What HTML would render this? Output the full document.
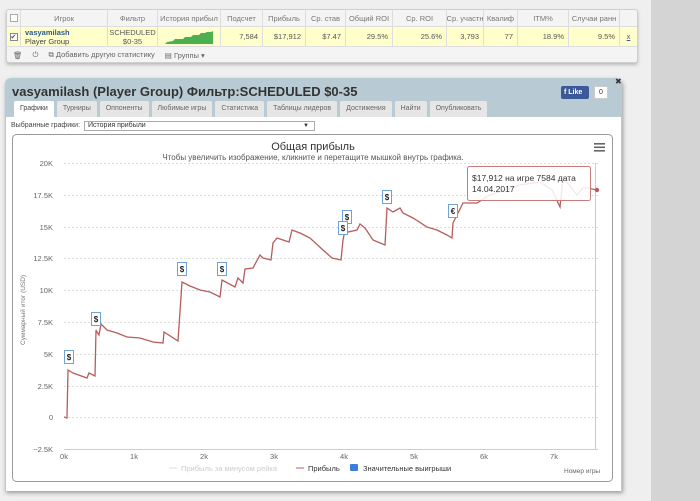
<!DOCTYPE html>
<html><head><meta charset="utf-8"><style>
*{box-sizing:border-box;margin:0;padding:0}
body{width:700px;height:501px;background:#efefef;font-family:"Liberation Sans","DejaVu Sans",sans-serif;position:relative;overflow:hidden;color:#333}
.strip{position:absolute;left:651px;top:0;width:49px;height:501px;background:#d4d4d4}
.tbl{position:absolute;left:6px;top:9px;width:632px;height:54px;background:#f4f4f4;border:1px solid #cfcfcf;border-radius:3px;box-shadow:0 2px 3px #bbb;font-size:7.5px;color:#777}
.row{position:absolute;left:0;width:630px;display:flex}
.row div{border-right:1px solid #ddd;height:100%;display:flex;align-items:center;justify-content:center;white-space:nowrap;overflow:hidden}
.h{top:0;height:17px;border-bottom:1px solid #ddd}
.d{top:17px;height:20px;background:#ffffcc;border-bottom:1px solid #ddd;color:#555}
.d div.r{justify-content:flex-end;padding-right:4px}
.f{top:37px;height:16px;color:#666;padding-left:6px;align-items:center;gap:10px}
.panel{position:absolute;left:5px;top:78px;width:617px;height:413px;background:#b8cbd4;border-radius:6px 6px 0 0;box-shadow:1px 2px 4px #999}
.title{position:absolute;left:7px;top:6px;font-size:13px;font-weight:bold;color:#333}
.tabs{position:absolute;left:9px;top:23px;display:flex;gap:3px}
.tabs span{background:#e6e6e6;font-size:7px;color:#666;padding:4px 6px 4px;border-radius:2px 2px 0 0;height:16px}
.tabs span.a{background:#fff;color:#444}
.content{position:absolute;left:1px;top:39px;width:615px;height:374px;background:#fff}
.sel{position:absolute;left:5px;top:5px;font-size:7px;color:#444}
.selbox{position:absolute;left:78px;top:4px;width:231px;height:10px;border:1px solid #aaa;font-size:7px;padding-left:3px;line-height:8px}
.chart{position:absolute;left:6px;top:16px;width:601px;height:348px;border:1px solid #999;border-radius:4px}
.fb{position:absolute;left:556px;top:8px;width:28px;height:13px;background:#3b5998;color:#fff;font-size:7px;font-weight:bold;line-height:13px;padding-left:3px;border-radius:2px}
.fbc{position:absolute;left:589px;top:8px;width:14px;height:13px;background:#fff;border:1px solid #ccc;font-size:7px;text-align:center;line-height:11px}
</style></head><body>
<div class="strip"></div>
<div class="tbl">
<div class="row h"><div style="width:14px"><span style="width:8px;height:8px;border:1px solid #aaa;background:#fff;display:block"></span></div><div style="width:87px">Игрок</div><div style="width:50px">Фильтр</div><div style="width:63px">История прибыл</div><div style="width:42px">Подсчет</div><div style="width:43px">Прибыль</div><div style="width:40px">Ср. став</div><div style="width:47px">Общий ROI</div><div style="width:54px">Ср. ROI</div><div style="width:37px">Ср. участн</div><div style="width:34px">Квалиф</div><div style="width:51px">ITM%</div><div style="width:51px">Случаи ранн</div><div style="width:17px;border:0"></div></div>
<div class="row d"><div style="width:14px"><span style="width:8px;height:8px;border:1px solid #888;background:#fff;display:block;font-size:7px;line-height:7px">✔</span></div><div style="width:87px;flex-direction:column;align-items:flex-start;padding-left:4px;line-height:9px"><b style="color:#2a5a8a">vasyamilash</b><span style="color:#444">Player Group</span></div><div style="width:50px;flex-direction:column;line-height:9px">SCHEDULED<span>$0-35</span></div><div style="width:63px"><svg width="48" height="14"><path d="M0 14 L2 12 L8 11 L10 9 L18 9 L20 7 L26 7 L28 5 L34 5 L36 3 L40 3 L42 2 L46 2 L48 1 L48 14Z" fill="#4caf50"/></svg></div><div class="r" style="width:42px">7,584</div><div class="r" style="width:43px">$17,912</div><div class="r" style="width:40px">$7.47</div><div class="r" style="width:47px">29.5%</div><div class="r" style="width:54px">25.6%</div><div class="r" style="width:37px">3,793</div><div class="r" style="width:34px">77</div><div class="r" style="width:51px">18.9%</div><div class="r" style="width:51px">9.5%</div><div style="width:17px;border:0;text-decoration:underline;color:#558">x</div></div>
<div class="row f"><span>🗑</span><span>⏻</span><span>⧉ Добавить другую статистику</span><span>▤ Группы ▾</span></div>
</div>
<div class="panel">
<div class="title">vasyamilash (Player Group) Фильтр:SCHEDULED $0-35</div>
<div class="fb">f Like</div><div class="fbc">0</div>
<div style="position:absolute;left:610px;top:-1px;font-size:8px;font-weight:bold">✖</div>
<div class="tabs"><span class="a">Графики</span><span>Турниры</span><span>Оппоненты</span><span>Любимые игры</span><span>Статистика</span><span>Таблицы лидеров</span><span>Достижения</span><span>Найти</span><span>Опубликовать</span></div>
<div class="content">
<div class="sel">Выбранные графики:</div><div class="selbox">История прибыли<span style="position:absolute;right:5px;top:0;font-size:6px">▼</span></div>
</div>
</div>
<svg style="position:absolute;left:0;top:0" width="700" height="501" font-family="Liberation Sans, DejaVu Sans, sans-serif">
<rect x="12.5" y="134.5" width="600" height="347" rx="4" fill="#fff" stroke="#999"/>
<text x="313" y="150" font-size="11" fill="#333" text-anchor="middle">Общая прибыль</text>
<text x="313" y="160" font-size="8" fill="#555" text-anchor="middle">Чтобы увеличить изображение, кликните и перетащите мышкой внутрь графика.</text>
<g fill="#666"><rect x="594" y="143" width="11" height="1.6"/><rect x="594" y="146.5" width="11" height="1.6"/><rect x="594" y="150" width="11" height="1.6"/></g>
<g stroke="#ddd" stroke-dasharray="2,2" stroke-width="1">
<line x1="64" x2="598" y1="163.5" y2="163.5"/><line x1="64" x2="598" y1="195.5" y2="195.5"/><line x1="64" x2="598" y1="227.5" y2="227.5"/><line x1="64" x2="598" y1="258.5" y2="258.5"/><line x1="64" x2="598" y1="290.5" y2="290.5"/><line x1="64" x2="598" y1="322.5" y2="322.5"/><line x1="64" x2="598" y1="354.5" y2="354.5"/><line x1="64" x2="598" y1="386.5" y2="386.5"/><line x1="64" x2="598" y1="417.5" y2="417.5"/></g>
<line x1="64" x2="598" y1="449.5" y2="449.5" stroke="#ccc"/>
<g font-size="7.5" fill="#666" text-anchor="end"><text x="53" y="166">20K</text><text x="53" y="198">17.5K</text><text x="53" y="230">15K</text><text x="53" y="261">12.5K</text><text x="53" y="293">10K</text><text x="53" y="325">7.5K</text><text x="53" y="357">5K</text><text x="53" y="389">2.5K</text><text x="53" y="420">0</text><text x="53" y="452">−2.5K</text></g>
<g font-size="7.5" fill="#666" text-anchor="middle"><text x="64" y="459">0k</text><text x="134" y="459">1k</text><text x="204" y="459">2k</text><text x="274" y="459">3k</text><text x="344" y="459">4k</text><text x="414" y="459">5k</text><text x="484" y="459">6k</text><text x="554" y="459">7k</text></g>
<text transform="translate(25,345) rotate(-90)" font-size="6.5" fill="#777">Суммарный итог (USD)</text>
<line x1="595.5" x2="595.5" y1="163" y2="449" stroke="#ccc"/>
<polyline fill="none" stroke="#b85c5c" stroke-width="1.3" points="64,417 67,418 68,370 73,373 87,378 89,373 93,375 95,376 96,330 97,332 99,335 101,324 107,330 117,333 127,337 140,338 153,342 163,343 164,332 178,341 182,282 190,286 200,290 210,292 220,297 222,280 235,287 238,278 243,283 245,269 253,268 260,255 263,258 271,260 273,243 277,238 289,242 292,230 300,233 310,238 323,250 332,258 341,260 343,240 345,230 348,232 357,230 360,224 365,228 373,240 385,245 387,208 393,212 400,208 403,213 413,218 427,227 437,230 447,235 452,238 453,223 457,215 463,203 477,203 490,195 505,190 520,185 540,182 552,190 560,207 563,177 577,195 583,188 587,188 597,190"/>
<circle cx="597" cy="190" r="2.2" fill="#b85c5c"/>
<g font-size="8" font-weight="bold" text-anchor="middle" fill="#222">
<g><rect x="64.5" y="350.5" width="9" height="13" fill="#fff" stroke="#6fa3d8"/><text x="69" y="360">$</text></g>
<g><rect x="91.5" y="312.5" width="9" height="13" fill="#fff" stroke="#6fa3d8"/><text x="96" y="322">$</text></g>
<g><rect x="177.5" y="262.5" width="9" height="13" fill="#fff" stroke="#6fa3d8"/><text x="182" y="272">$</text></g>
<g><rect x="217.5" y="262.5" width="9" height="13" fill="#fff" stroke="#6fa3d8"/><text x="222" y="272">$</text></g>
<g><rect x="342.5" y="210.5" width="9" height="13" fill="#fff" stroke="#6fa3d8"/><text x="347" y="220">$</text></g>
<g><rect x="338.5" y="221.5" width="9" height="13" fill="#fff" stroke="#6fa3d8"/><text x="343" y="231">$</text></g>
<g><rect x="382.5" y="190.5" width="9" height="13" fill="#fff" stroke="#6fa3d8"/><text x="387" y="200">$</text></g>
<g><rect x="448.5" y="204.5" width="9" height="13" fill="#fff" stroke="#6fa3d8"/><text x="453" y="214">€</text></g>
</g>
<rect x="467.5" y="166.5" width="123" height="34" rx="2" fill="#fff" fill-opacity="0.85" stroke="#c97a7a"/>
<text x="472" y="181" font-size="8.5" fill="#333">$17,912 на игре 7584 дата</text>
<text x="472" y="192" font-size="8.5" fill="#333">14.04.2017</text>
<g font-size="7.5"><line x1="169" x2="177" y1="468" y2="468" stroke="#ddd"/><text x="181" y="471" fill="#ccc">Прибыль за минусом рейка</text>
<line x1="296" x2="304" y1="468" y2="468" stroke="#b85c5c"/><text x="308" y="471" fill="#333">Прибыль</text>
<rect x="350" y="464" width="8" height="7" rx="1" fill="#3b7dd8"/><text x="363" y="471" fill="#333">Значительные выигрыши</text></g>
<text x="564" y="473" font-size="6.5" fill="#666">Номер игры</text>
</svg>
</body></html>
